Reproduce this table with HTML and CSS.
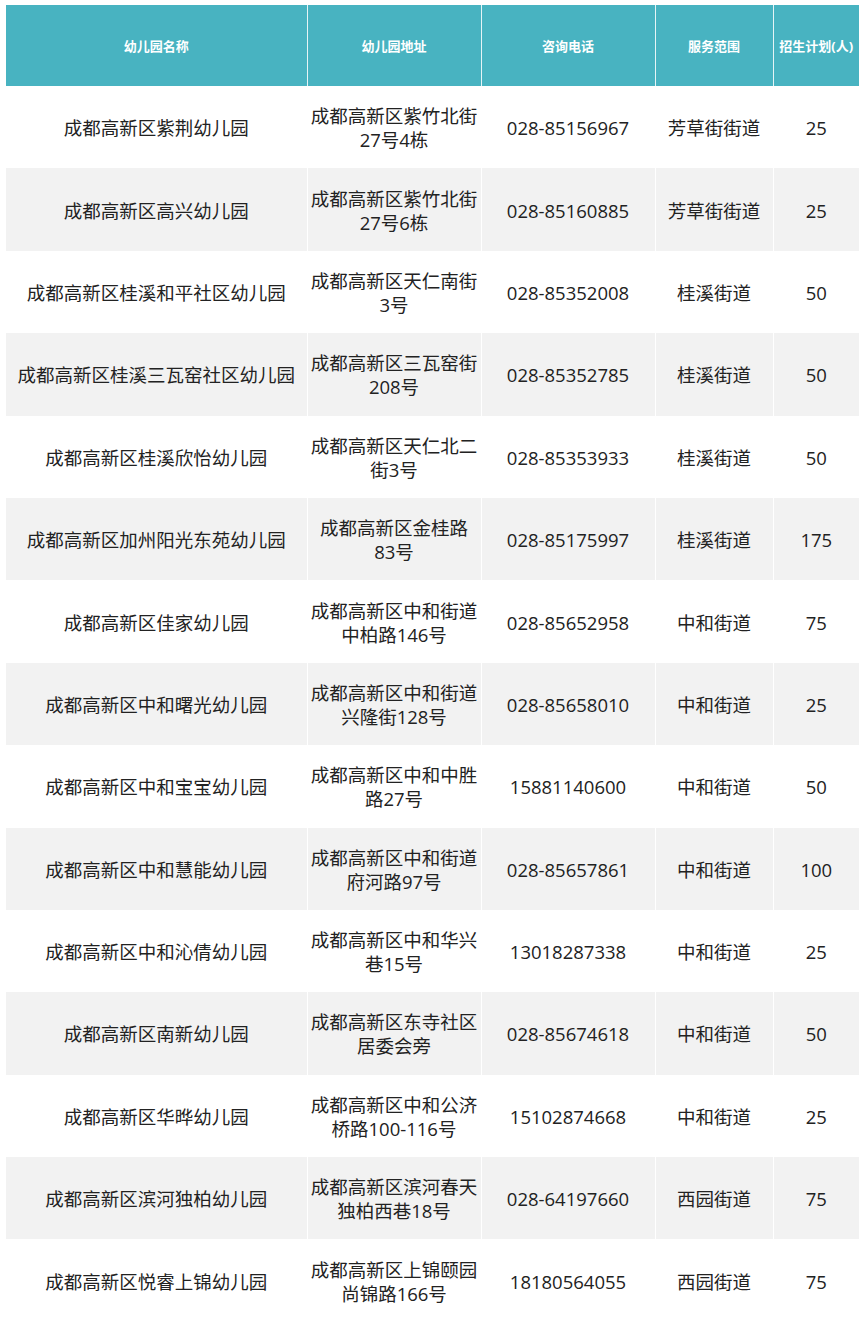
FILE: index.html
```html
<!DOCTYPE html>
<html lang="zh-CN">
<head>
<meta charset="utf-8">
<title>幼儿园招生计划</title>
<link rel="stylesheet" href="styles.css">
</head>
<body>
<div class="wrap">
<table class="list">
  <colgroup>
    <col class="c1"><col class="c2"><col class="c3"><col class="c4"><col class="c5">
  </colgroup>
  <thead>
    <tr><th>幼儿园名称</th><th>幼儿园地址</th><th>咨询电话</th><th>服务范围</th><th>招生计划(人)</th></tr>
  </thead>
  <tbody>
    <tr><td>成都高新区紫荆幼儿园</td><td>成都高新区紫竹北街<br>27号4栋</td><td>028-85156967</td><td>芳草街街道</td><td>25</td></tr>
    <tr><td>成都高新区高兴幼儿园</td><td>成都高新区紫竹北街<br>27号6栋</td><td>028-85160885</td><td>芳草街街道</td><td>25</td></tr>
    <tr><td>成都高新区桂溪和平社区幼儿园</td><td>成都高新区天仁南街<br>3号</td><td>028-85352008</td><td>桂溪街道</td><td>50</td></tr>
    <tr><td>成都高新区桂溪三瓦窑社区幼儿园</td><td>成都高新区三瓦窑街<br>208号</td><td>028-85352785</td><td>桂溪街道</td><td>50</td></tr>
    <tr><td>成都高新区桂溪欣怡幼儿园</td><td>成都高新区天仁北二<br>街3号</td><td>028-85353933</td><td>桂溪街道</td><td>50</td></tr>
    <tr><td>成都高新区加州阳光东苑幼儿园</td><td>成都高新区金桂路<br>83号</td><td>028-85175997</td><td>桂溪街道</td><td>175</td></tr>
    <tr><td>成都高新区佳家幼儿园</td><td>成都高新区中和街道<br>中柏路146号</td><td>028-85652958</td><td>中和街道</td><td>75</td></tr>
    <tr><td>成都高新区中和曙光幼儿园</td><td>成都高新区中和街道<br>兴隆街128号</td><td>028-85658010</td><td>中和街道</td><td>25</td></tr>
    <tr><td>成都高新区中和宝宝幼儿园</td><td>成都高新区中和中胜<br>路27号</td><td>15881140600</td><td>中和街道</td><td>50</td></tr>
    <tr><td>成都高新区中和慧能幼儿园</td><td>成都高新区中和街道<br>府河路97号</td><td>028-85657861</td><td>中和街道</td><td>100</td></tr>
    <tr><td>成都高新区中和沁倩幼儿园</td><td>成都高新区中和华兴<br>巷15号</td><td>13018287338</td><td>中和街道</td><td>25</td></tr>
    <tr><td>成都高新区南新幼儿园</td><td>成都高新区东寺社区<br>居委会旁</td><td>028-85674618</td><td>中和街道</td><td>50</td></tr>
    <tr><td>成都高新区华晔幼儿园</td><td>成都高新区中和公济<br>桥路100-116号</td><td>15102874668</td><td>中和街道</td><td>25</td></tr>
    <tr><td>成都高新区滨河独柏幼儿园</td><td>成都高新区滨河春天<br>独柏西巷18号</td><td>028-64197660</td><td>西园街道</td><td>75</td></tr>
    <tr><td>成都高新区悦睿上锦幼儿园</td><td>成都高新区上锦颐园<br>尚锦路166号</td><td>18180564055</td><td>西园街道</td><td>75</td></tr>
  </tbody>
</table>
</div>
</body>
</html>
```
FILE: styles.css
```css
html, body {
  margin: 0;
  padding: 0;
  background: #ffffff;
}
.wrap {
  padding: 5px 0 0 6px;
}
.list {
  width: 853px;
  border-collapse: collapse;
  table-layout: fixed;
  font-family: "Open Sans", "Noto Sans CJK SC", sans-serif;
}
.c1 { width: 301px; }
.c2 { width: 174px; }
.c3 { width: 174px; }
.c4 { width: 118px; }
.c5 { width: 86px; }
.list th {
  height: 81px;
  padding: 0;
  background: #48b3c1;
  color: #ffffff;
  font-size: 13px;
  font-weight: 700;
  text-align: center;
  vertical-align: middle;
  border-left: 1px solid #e6f4f6;
}
.list th:first-child,
.list td:first-child {
  border-left: none;
}
.list td {
  height: 80.4px;
  padding: 2px 0 0 0;
  font-size: 18.5px;
  line-height: 24px;
  color: #222222;
  text-align: center;
  vertical-align: middle;
  border-left: 1px solid #ffffff;
  white-space: nowrap;
}
.list tbody tr:nth-child(even) td {
  background: #f2f2f2;
}
```
